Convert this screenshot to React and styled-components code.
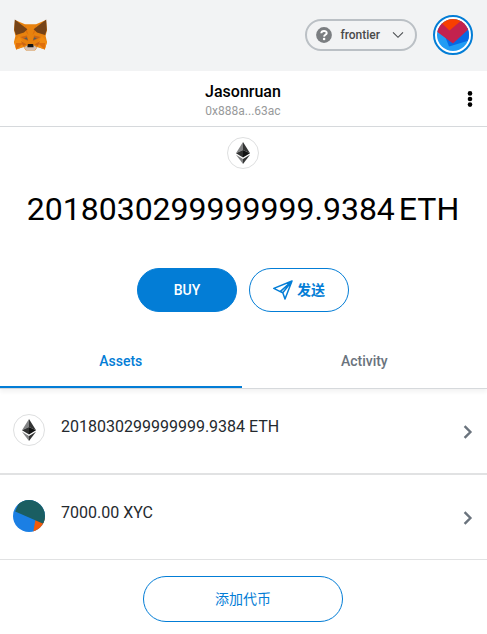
import React from "react";
import styled, { createGlobalStyle, css } from "styled-components";

const blue = "#037dd6";

const GlobalStyle = createGlobalStyle`
  *, *::before, *::after { box-sizing: border-box; }
  body {
    margin: 0;
    background: #fff;
    color: #000;
    font-family: Roboto, "Noto Sans CJK SC", sans-serif;
    font-size: 14px;
  }
  button { font-family: inherit; cursor: pointer; }
  h1, p, ul { margin: 0; padding: 0; }
  svg { display: block; flex: none; }
`;

const Page = styled.div`
  display: flex;
  flex-direction: column;
`;

const Header = styled.header`
  display: flex;
  align-items: center;
  justify-content: space-between;
  padding: 15px 14px 16px 13px;
  background: #f2f3f4;
`;

const HeaderActions = styled.div`
  display: flex;
  align-items: center;
  gap: 16px;
`;

const PlainButton = styled.button`
  display: flex;
  align-items: center;
  justify-content: center;
  padding: 0;
  border: 0;
  background: none;
  color: inherit;
`;

const NetworkButton = styled(PlainButton)`
  height: 32px;
  padding: 0 11px 0 9px;
  border: 2px solid #bbc0c5;
  border-radius: 16px;
  color: #4a4a4a;
  font-size: 12px;
  font-weight: 500;
`;

const NetworkName = styled.span`
  margin: 0 12px 0 8px;
`;

const AvatarButton = styled(PlainButton)`
  width: 40px;
  height: 40px;
  border: 2px solid ${blue};
  border-radius: 50%;
  background: #fff;
`;

const MenuBar = styled.div`
  display: grid;
  grid-template-columns: 1fr auto 1fr;
  align-items: center;
  height: 56px;
  border-bottom: 1px solid #d6d9dc;
`;

const AccountButton = styled(PlainButton)`
  grid-column: 2;
  flex-direction: column;
  padding: 4px 1px 0 0;
`;

const AccountName = styled.span`
  font-size: 16px;
  font-weight: 500;
  line-height: 20px;
`;

const AccountAddress = styled.span`
  color: #989a9b;
  font-size: 12px;
  line-height: 18px;
`;

const OptionsButton = styled(PlainButton)`
  justify-self: end;
  width: 34px;
  height: 32px;
`;

const Balance = styled.section`
  display: flex;
  flex-direction: column;
  align-items: center;
  padding: 10px 17px 22px 16px;
`;

const TokenBadge = styled.span`
  display: flex;
  flex: none;
  align-items: center;
  justify-content: center;
  width: 32px;
  height: 32px;
  overflow: hidden;
  border: ${(p) => (p.$outlined ? "1px solid #dedfe0" : "0")};
  border-radius: 50%;
`;

const Amount = styled.h1`
  display: flex;
  gap: 4px;
  margin: 20px 0 39px;
  font-size: 32px;
  font-weight: 400;
  line-height: 40px;
`;

const Actions = styled.div`
  display: flex;
  gap: 12px;
`;

const PillButton = styled.button`
  display: flex;
  align-items: center;
  justify-content: center;
  gap: 4px;
  width: ${(p) => (p.$wide ? "200px" : "100px")};
  height: ${(p) => (p.$wide ? "46px" : "44px")};
  padding: 0;
  border: 1px solid ${blue};
  border-radius: 23px;
  background: ${(p) => (p.$filled ? blue : "#fff")};
  color: ${(p) => (p.$filled ? "#fff" : blue)};
  font-size: 14px;
  line-height: 20px;
  font-weight: ${(p) => (p.$wide ? 400 : 500)};
`;

const SendLabel = styled.span`
  font-weight: 700;
`;

const Tabs = styled.div`
  display: flex;
  border-bottom: 1px solid #d6d9dc;
  box-shadow: 0 3px 4px rgba(0, 0, 0, 0.05);
`;

const Tab = styled.button`
  flex: 1 1 auto;
  height: 54px;
  padding: 2px 0 0;
  border: 0;
  border-bottom: 2px solid transparent;
  background: none;
  color: #6a737d;
  font-size: 14px;
  font-weight: 500;
  ${(p) =>
    p.$active &&
    css`
      border-bottom-color: ${blue};
      color: ${blue};
    `}
`;

const AssetList = styled.ul`
  list-style: none;
`;

const AssetItem = styled.li`
  border-bottom: 1px solid #e1e2e3;
  & + & { border-top: 1px solid #e1e2e3; }
`;

const AssetButton = styled.button`
  display: flex;
  align-items: center;
  gap: 16px;
  width: 100%;
  height: 84px;
  padding: 1px 14px 0 13px;
  border: 0;
  background: none;
  color: #24292e;
  font-size: 16px;
  text-align: left;
`;

const AssetInfo = styled.span`
  display: flex;
  flex: 1;
  align-items: flex-start;
  gap: 16px;
  height: 36px;
`;

const AssetAmount = styled.span`
  line-height: 26px;
`;

const Footer = styled.footer`
  display: flex;
  justify-content: center;
  padding: 16px 1px 12px 0;
`;

const Fox = () => (
  <svg width="35" height="34" viewBox="0 0 35 34" role="img" aria-label="MetaMask">
    <path fill="#e8820e" d="M2 2 12 6.2H23L33 2 34 12 32.6 18 34 24 31.8 31.5 24.6 29 22 32.5H13L10.4 29 3.2 31.5 1 24 2.4 18 1 12z" />
    <path fill="#f18b12" d="M1 24 6 18 10.5 24.5 10.4 29 3.2 31.5zM34 24 29 18 24.5 24.5 24.6 29 31.8 31.5z" />
    <path fill="#df6f0d" d="M3 25H10.5L3.2 31.5zM32 25H24.5L31.8 31.5zM12 6.2 15.5 17 13 14zM23 6.2 19.5 17 22 14z" />
    <path fill="#764317" d="M1.8 1.4 14.4 11.3 11 14.5 3 17 1.2 12zM33.2 1.4 20.6 11.3 24 14.5 32 17 33.8 12z" />
    <path fill="#cc6515" d="M7.5 19 14 17.4 15.2 23 10.8 21zM27.5 19 21 17.4 19.8 23 24.2 21zM8 23 13.5 26.5 10 28zM27 23 21.5 26.5 25 28z" />
    <path fill="#59605c" d="m11 20.5 2.8-1.2 1 2.6zM24 20.5l-2.8-1.2-1 2.6z" />
    <path fill="#d4c1b5" d="M11 29.5 14 27.5H21L24 29.5 21.3 32.6H13.7z" />
    <path fill="#171615" d="m14.7 26.6.7-.5h4.2l.7.5.3 2.7h-6.2z" />
  </svg>
);

const QuestionIcon = () => (
  <svg width="16" height="16" viewBox="0 0 16 16" aria-hidden="true">
    <circle cx="8" cy="8" r="7.9" fill="#7b7e81" />
    <path d="M5.3 6.3C5.4 3 10.8 3.2 10.7 6.1 10.6 7.8 8.2 7.8 8.1 9.6" fill="none" stroke="#fff" strokeWidth="2" />
    <circle cx="8.1" cy="12" r="1.3" fill="#fff" />
  </svg>
);

const ChevronDown = () => (
  <svg width="12" height="8" viewBox="0 0 12 8" aria-hidden="true">
    <path d="M1 1.3 6 6.3 11 1.3" fill="none" stroke="#4a4d50" strokeWidth="1.1" />
  </svg>
);

const ChevronRight = () => (
  <svg width="10" height="16" viewBox="0 0 10 16" aria-hidden="true">
    <path d="M1.6 2.2 7.4 8 1.6 13.8" fill="none" stroke="#6a737d" strokeWidth="2.4" />
  </svg>
);

const AccountAvatar = () => (
  <svg width="32" height="32" viewBox="0 0 32 32" aria-hidden="true">
    <clipPath id="avatar-clip"><circle cx="16" cy="16" r="16" /></clipPath>
    <g clipPath="url(#avatar-clip)">
      <path fill="#219cf4" d="M0 0h32v32H0z" />
      <path fill="#0769e3" d="M8 17 12 27.5 32 21.5V8z" />
      <path fill="#f73f01" d="M0 0h32L16 20z" />
      <path fill="#c3224e" d="M4.5 4 12.5 11.5 26 0 34 8 16 24.5-1 12z" />
    </g>
  </svg>
);

const TokenAvatar = () => (
  <svg width="32" height="32" viewBox="0 0 32 32" aria-hidden="true">
    <path fill="#1b7fe4" d="M0 0h32v32H0z" />
    <path fill="#f45a08" d="M22.7 18 20.3 32H32V18z" />
    <path fill="#1a5e62" d="M2.2 11.4 7 0h25v24.6z" />
  </svg>
);

const EthIcon = () => (
  <svg width="14" height="22" viewBox="0 0 14 22" aria-hidden="true">
    <path fill="#828384" d="M7 0 0 11.3 7 8z" />
    <path fill="#343535" d="M7 0v8l7 3.3z" />
    <path fill="#2f3030" d="M0 11.3 7 8v7.4z" />
    <path fill="#121313" d="M14 11.3 7 8v7.4z" />
    <path fill="#828384" d="m0 12.8 7 4.1V22z" />
    <path fill="#343535" d="m14 12.8-7 4.1V22z" />
  </svg>
);

const OptionsIcon = () => (
  <svg width="6" height="18" viewBox="0 0 6 18" aria-hidden="true">
    <circle cx="3" cy="3.4" r="2.3" />
    <circle cx="3" cy="9" r="2.3" />
    <circle cx="3" cy="14.6" r="2.3" />
  </svg>
);

const SendIcon = () => (
  <svg width="20" height="20" viewBox="0 0 20 20" fill="none" stroke={blue} strokeWidth="1.5" strokeLinejoin="round" aria-hidden="true">
    <path d="M19 1 .8 8.4 7.2 11.6zM19 1 9.8 12.8 12 19zM7.2 11.6 9.8 12.8" />
  </svg>
);

const assets = [
  { amount: "2018030299999999.9384", symbol: "ETH", outlined: true, Icon: EthIcon },
  { amount: "7000.00", symbol: "XYC", outlined: false, Icon: TokenAvatar },
];

export default function App() {
  return (
    <Page>
      <GlobalStyle />
      <Header>
        <Fox />
        <HeaderActions>
          <NetworkButton type="button">
            <QuestionIcon />
            <NetworkName>frontier</NetworkName>
            <ChevronDown />
          </NetworkButton>
          <AvatarButton type="button" aria-label="Accounts">
            <AccountAvatar />
          </AvatarButton>
        </HeaderActions>
      </Header>
      <MenuBar>
        <AccountButton type="button">
          <AccountName>Jasonruan</AccountName>
          <AccountAddress>0x888a...63ac</AccountAddress>
        </AccountButton>
        <OptionsButton type="button" aria-label="Account options">
          <OptionsIcon />
        </OptionsButton>
      </MenuBar>
      <main>
        <Balance>
          <TokenBadge $outlined><EthIcon /></TokenBadge>
          <Amount>
            <span>2018030299999999.9384</span>
            <span>ETH</span>
          </Amount>
          <Actions>
            <PillButton type="button" $filled>BUY</PillButton>
            <PillButton type="button"><SendIcon /><SendLabel>发送</SendLabel></PillButton>
          </Actions>
        </Balance>
        <Tabs role="tablist">
          <Tab type="button" role="tab" aria-selected="true" $active>Assets</Tab>
          <Tab type="button" role="tab" aria-selected="false">Activity</Tab>
        </Tabs>
        <AssetList>
          {assets.map(({ amount, symbol, outlined, Icon }) => (
            <AssetItem key={symbol}>
              <AssetButton type="button">
                <AssetInfo>
                  <TokenBadge $outlined={outlined}><Icon /></TokenBadge>
                  <AssetAmount>{amount} {symbol}</AssetAmount>
                </AssetInfo>
                <ChevronRight />
              </AssetButton>
            </AssetItem>
          ))}
        </AssetList>
      </main>
      <Footer>
        <PillButton type="button" $wide>添加代币</PillButton>
      </Footer>
    </Page>
  );
}
